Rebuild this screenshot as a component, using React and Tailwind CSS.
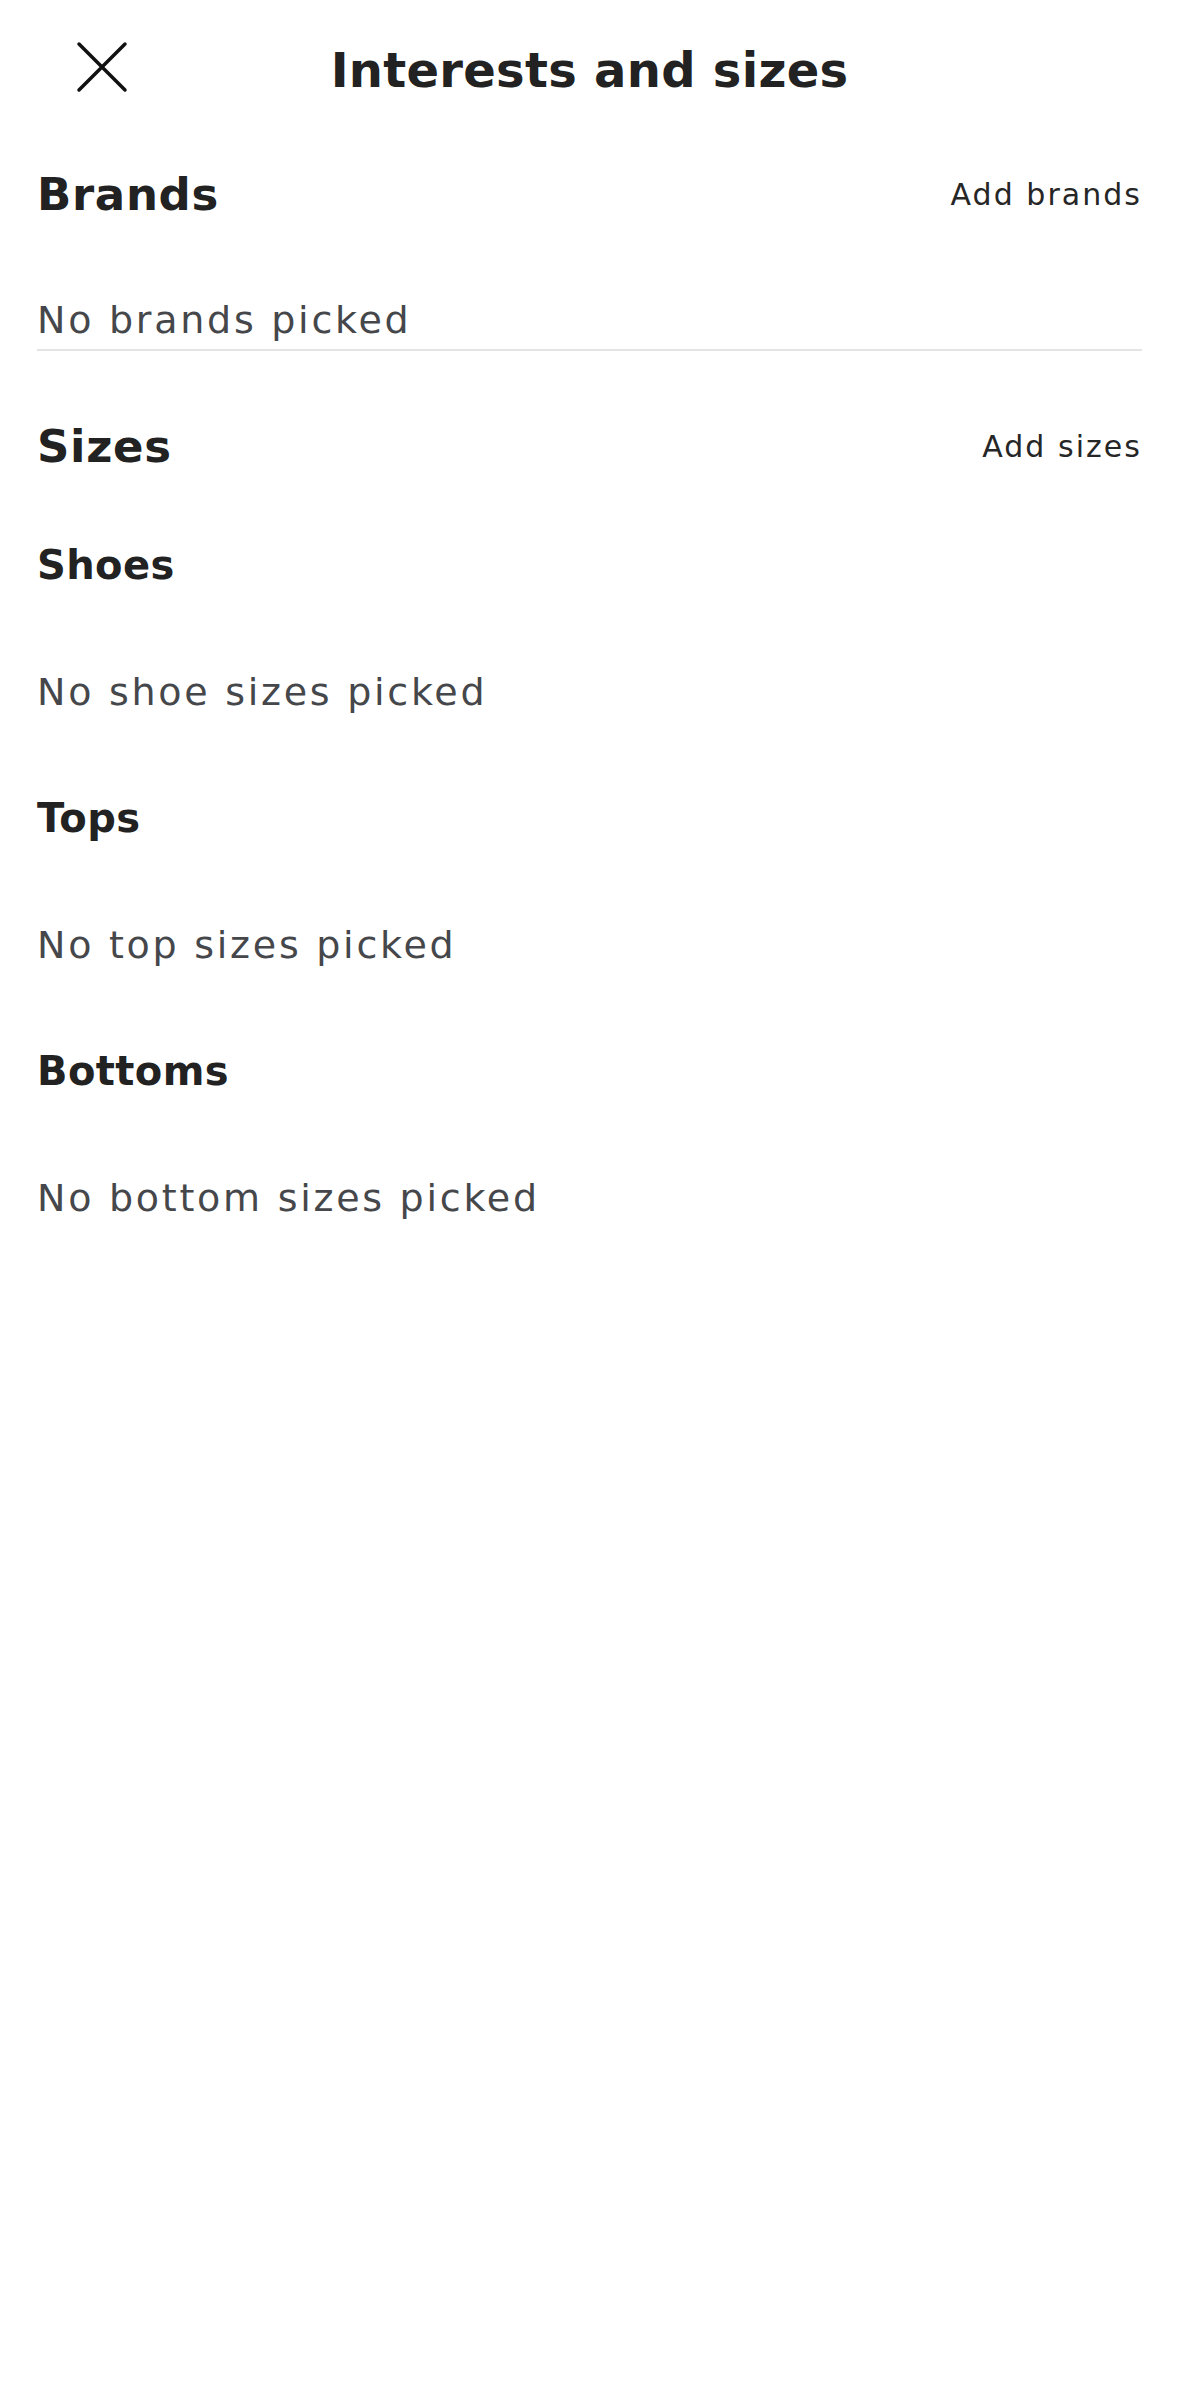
import React from 'react';

// Close (X) icon, drawn to match the reference strokes
const CloseIcon = () => (
  <svg width="52" height="52" viewBox="0 0 52 52" fill="none" aria-hidden="true">
    <path d="M3 3 L49 49 M49 3 L3 49" stroke="#111111" strokeWidth="3.5" strokeLinecap="round" />
  </svg>
);

const SectionHeader = ({ title, action, className }) => (
  <div className={`flex items-center justify-between px-[37px] ${className}`}>
    <h2 className="text-[45px] leading-[45px] font-bold tracking-[0.015em] text-[#222222]">{title}</h2>
    <button className="text-[30px] leading-[30px] tracking-[0.068em] text-[#262626]">{action}</button>
  </div>
);

const EmptyText = ({ children, className }) => (
  <p className={`px-[37px] text-[38px] leading-[38px] tracking-[0.072em] text-[#45474b] ${className}`}>{children}</p>
);

const SubHeading = ({ children, className }) => (
  <h3 className={`px-[37px] text-[40px] leading-[40px] font-bold tracking-[0.01em] text-[#222222] ${className}`}>
    {children}
  </h3>
);

const sizeGroups = [
  { label: 'Shoes', empty: 'No shoe sizes picked' },
  { label: 'Tops', empty: 'No top sizes picked' },
  { label: 'Bottoms', empty: 'No bottom sizes picked' },
];

export default function App() {
  return (
    <div className="min-h-[2396px] w-full bg-white font-['DejaVu_Sans',sans-serif]">
      {/* Top bar */}
      <header className="grid grid-cols-[1fr_auto_1fr] items-start pt-[41px]">
        <div className="pl-[76px]">
          <CloseIcon />
        </div>
        <h1 className="mt-[5px] text-[48px] leading-[48px] font-bold tracking-[0.006em] text-[#222222]">
          Interests and sizes
        </h1>
        <div />
      </header>

      {/* Brands */}
      <SectionHeader title="Brands" action="Add brands" className="mt-[78px]" />
      <EmptyText className="mt-[84px]">No brands picked</EmptyText>
      <div className="mx-[37px] mt-[10px] h-[2px] bg-[#e4e4e4]" />

      {/* Sizes */}
      <SectionHeader title="Sizes" action="Add sizes" className="mt-[73px]" />
      {sizeGroups.map((g, i) => (
        <div key={g.label}>
          <SubHeading className={i === 0 ? 'mt-[76px]' : 'mt-[87px]'}>{g.label}</SubHeading>
          <EmptyText className="mt-[88px]">{g.empty}</EmptyText>
        </div>
      ))}
    </div>
  );
}
